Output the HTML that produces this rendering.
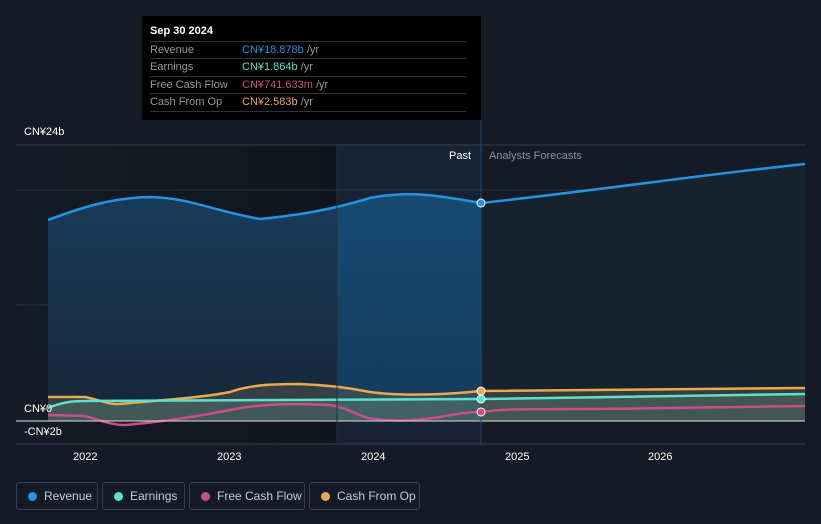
<!DOCTYPE html>
<html><head><meta charset="utf-8"><style>
body{margin:0;width:821px;height:524px;background:#151b26;font-family:"Liberation Sans",sans-serif;overflow:hidden;position:relative}
.t{position:absolute;font-size:11px;color:#fff}
.leg{position:absolute;top:482px;height:28px;border:1px solid #3a404b;border-radius:3px;box-sizing:border-box;color:#c8ccd2;font-size:12px;line-height:26px;padding-left:27px}
.leg i{position:absolute;left:11px;top:9px;width:9px;height:9px;border-radius:50%}
.tip{position:absolute;left:142px;top:16px;width:339px;height:104px;background:#000}
.row{position:absolute;left:8px;width:316px;border-top:1px solid #333;font-size:11px;color:#999;height:17px;line-height:17px}
.row span{position:absolute;left:92px}
</style></head><body>
<svg width="821" height="524" style="position:absolute;left:0;top:0">
<defs>
<linearGradient id="bg" x1="0" y1="0" x2="1" y2="0"><stop offset="0" stop-color="#151b26"/><stop offset="1" stop-color="#10151d"/></linearGradient>
<linearGradient id="pf" x1="0" y1="0" x2="0" y2="1"><stop offset="0" stop-color="#183c5b"/><stop offset="1" stop-color="#172638"/></linearGradient>
<linearGradient id="hf" x1="0" y1="0" x2="0" y2="1"><stop offset="0" stop-color="#164a73"/><stop offset="1" stop-color="#143b5a"/></linearGradient>
</defs>
<rect x="16" y="145" width="321" height="299" fill="url(#bg)"/>
<rect x="337" y="145" width="144" height="299" fill="#152334"/>
<line x1="16" y1="145" x2="805" y2="145" stroke="#363c46"/>
<line x1="16" y1="190" x2="805" y2="190" stroke="#2a3039"/>
<line x1="16" y1="305" x2="805" y2="305" stroke="#2a3039"/>
<clipPath id="c1"><rect x="0" y="0" width="337" height="524"/></clipPath>
<clipPath id="c2"><rect x="337" y="0" width="144" height="524"/></clipPath>
<g clip-path="url(#c1)"><path d="M48,220 C80,208 110,198 150,197 C190,198 210,210 260,219 C300,215 330,210 370,198 C410,190 440,196 481,203 L481,421 L48,421Z" fill="url(#pf)"/></g>
<g clip-path="url(#c2)"><path d="M48,220 C80,208 110,198 150,197 C190,198 210,210 260,219 C300,215 330,210 370,198 C410,190 440,196 481,203 L481,421 L48,421Z" fill="url(#hf)"/></g>
<path d="M481,203 C600,190 700,175 805,164 L805,421 L481,421Z" fill="#17222f"/>
<path d="M48,397 L85,397 C100,400 110,405 120,404 C160,400 200,398 230,392 C250,385 270,384 300,384 C330,385 350,388 370,392 C400,396 440,395 481,391 L805,388 L805,421 L48,421Z" fill="#6f6a52" opacity=".35"/>
<path d="M48,408 C60,403 70,401 85,401 L481,399 L805,394 L805,421 L48,421Z" fill="#5a8a7e" opacity=".35"/>
<path d="M48,397 L85,397 C100,400 110,405 120,404 C160,400 200,398 230,392 C250,385 270,384 300,384 C330,385 350,388 370,392 C400,396 440,395 481,391 L805,388" fill="none" stroke="#e8a94f" stroke-width="2.5"/>
<path d="M48,408 C60,403 70,401 85,401 L481,399 L805,394" fill="none" stroke="#5de1cc" stroke-width="2.5"/>
<path d="M48,220 C80,208 110,198 150,197 C190,198 210,210 260,219 C300,215 330,210 370,198 C410,190 440,196 481,203 C600,190 700,175 805,164" fill="none" stroke="#2394df" stroke-width="2.5"/>
<path d="M48,415 L85,416 C100,420 110,425 125,425 C160,422 200,416 230,410 C260,404 290,403 330,405 C350,408 360,418 375,419 C400,422 420,420 440,417 C460,413 470,412 481,412 C500,409 520,409 600,409 L805,406" fill="none" stroke="#c94f88" stroke-width="2.5"/>
<line x1="16" y1="421" x2="805" y2="421" stroke="#ddd" stroke-width="1"/>
<line x1="16" y1="444" x2="805" y2="444" stroke="#3a404b"/>
<line x1="481" y1="120" x2="481" y2="444" stroke="#22466a"/>
<line x1="337" y1="145" x2="337" y2="444" stroke="#1c3248"/>
<circle cx="481" cy="203" r="4" fill="#2394df" stroke="#fff" stroke-width="1"/>
<circle cx="481" cy="391" r="4" fill="#e8a94f" stroke="#fff" stroke-width="1"/>
<circle cx="481" cy="399" r="4" fill="#5de1cc" stroke="#fff" stroke-width="1"/>
<circle cx="481" cy="412" r="4" fill="#c94f88" stroke="#fff" stroke-width="1"/>
</svg>
<div class="t" style="left:24px;top:126px">CN¥24b</div>
<div class="t" style="left:24px;top:403px">CN¥0</div>
<div class="t" style="left:24px;top:426px">-CN¥2b</div>
<div class="t" style="left:449px;top:150px">Past</div>
<div class="t" style="left:489px;top:150px;color:#8a9099">Analysts Forecasts</div>
<div class="t" style="left:73px;top:451px">2022</div>
<div class="t" style="left:217px;top:451px">2023</div>
<div class="t" style="left:361px;top:451px">2024</div>
<div class="t" style="left:505px;top:451px">2025</div>
<div class="t" style="left:648px;top:451px">2026</div>
<div class="tip">
<div style="position:absolute;left:8px;top:9px;font-size:11px;color:#fff;font-weight:bold">Sep 30 2024</div>
<div class="row" style="top:25px">Revenue<span style="color:#2394df">CN¥18.878b <b style="color:#999;font-weight:normal">/yr</b></span></div>
<div class="row" style="top:42px">Earnings<span style="color:#5de1cc">CN¥1.864b <b style="color:#999;font-weight:normal">/yr</b></span></div>
<div class="row" style="top:60px">Free Cash Flow<span style="color:#c94f88">CN¥741.633m <b style="color:#999;font-weight:normal">/yr</b></span></div>
<div class="row" style="top:77px">Cash From Op<span style="color:#e8a94f">CN¥2.583b <b style="color:#999;font-weight:normal">/yr</b></span></div>
<div class="row" style="top:95px;height:0"></div>
</div>
<div class="leg" style="left:16px;width:82px"><i style="background:#2394df"></i>Revenue</div>
<div class="leg" style="left:102px;width:83px"><i style="background:#5de1cc"></i>Earnings</div>
<div class="leg" style="left:189px;width:116px"><i style="background:#c94f88"></i>Free Cash Flow</div>
<div class="leg" style="left:309px;width:111px"><i style="background:#e8a94f"></i>Cash From Op</div>
</body></html>
